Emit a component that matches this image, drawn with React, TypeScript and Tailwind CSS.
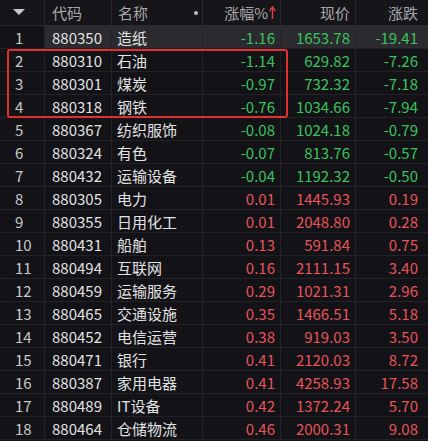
import React from "react";

type Row = [string, string, string, string, string, string];

const rows: Row[] = [
  ["1", "880350", "造纸", "-1.16", "1653.78", "-19.41"],
  ["2", "880310", "石油", "-1.14", "629.82", "-7.26"],
  ["3", "880301", "煤炭", "-0.97", "732.32", "-7.18"],
  ["4", "880318", "钢铁", "-0.76", "1034.66", "-7.94"],
  ["5", "880367", "纺织服饰", "-0.08", "1024.18", "-0.79"],
  ["6", "880324", "有色", "-0.07", "813.76", "-0.57"],
  ["7", "880432", "运输设备", "-0.04", "1192.32", "-0.50"],
  ["8", "880305", "电力", "0.01", "1445.93", "0.19"],
  ["10", "880355", "日用化工", "0.01", "2048.80", "0.28"],
  ["10", "880431", "船舶", "0.13", "591.84", "0.75"],
  ["11", "880494", "互联网", "0.16", "2111.15", "3.40"],
  ["12", "880459", "运输服务", "0.29", "1021.31", "2.96"],
  ["13", "880465", "交通设施", "0.35", "1466.51", "5.18"],
  ["14", "880452", "电信运营", "0.38", "919.03", "3.50"],
  ["15", "880471", "银行", "0.41", "2120.03", "8.72"],
  ["16", "880387", "家用电器", "0.41", "4258.93", "17.58"],
  ["17", "880489", "IT设备", "0.42", "1372.24", "5.70"],
  ["18", "880464", "仓储物流", "0.46", "2000.31", "9.08"],
];
rows[8][0] = "9";

const font = {
  fontFamily: '"Noto Sans CJK SC", "Noto Sans", sans-serif',
};

export default function App() {
  return (
    <div
      className="relative w-[428px] h-[441px] overflow-hidden bg-[#131317] text-[15px] leading-none"
      style={font}
    >
      <div className="grid grid-cols-[45px_67px_91px_78px_75px_72px]">
        {/* header */}
        <div className="h-[26px] flex items-center justify-center border-r border-b border-[#2a2a2f] bg-[#16161a] pr-[6px]">
          <svg width="12" height="7" viewBox="0 0 12 7">
            <path d="M0 0 L12 0 L6 6 Z" fill="#c8c8c8" />
          </svg>
        </div>
        <div className="h-[26px] flex items-center pl-[7px] border-r border-b border-[#2a2a2f] bg-[#16161a] text-[#a8a8a8]">
          代码
        </div>
        <div className="h-[26px] flex items-center justify-between pl-[6px] pr-[4px] border-r border-b border-[#2a2a2f] bg-[#16161a] text-[#a8a8a8]">
          <span>名称</span>
          <span className="w-[4px] h-[4px] rounded-full bg-[#bdbdbd]" />
        </div>
        <div className="h-[26px] flex items-center justify-end pr-[4px] border-r border-b border-[#2a2a2f] bg-[#16161a] text-[#a8a8a8]">
          <span>涨幅%</span>
          <svg width="7" height="14" viewBox="0 0 7 14" className="ml-[1px]">
            <path d="M3.5 1 L3.5 13" stroke="#e0413f" strokeWidth="1.4" />
            <path d="M0.5 5 L3.5 1 L6.5 5" stroke="#e0413f" strokeWidth="1.4" fill="none" />
          </svg>
        </div>
        <div className="h-[26px] flex items-center justify-end pr-[5px] border-r border-b border-[#2a2a2f] bg-[#16161a] text-[#a8a8a8]">
          现价
        </div>
        <div className="h-[26px] flex items-center justify-end pr-[10px] border-b border-[#2a2a2f] bg-[#16161a] text-[#a8a8a8]">
          涨跌
        </div>

        {rows.map((r, i) => {
          const neg = r[3].startsWith("-");
          const color = neg ? "text-[#3cc35e]" : "text-[#e8535a]";
          const hl = i === 0 ? "bg-[#2a2a2f]" : "";
          return (
            <React.Fragment key={i}>
              <div className="h-[23px] flex items-center pl-[15px] border-r border-b border-[#232327] text-[#c9c9c9]">
                {r[0]}
              </div>
              <div className={`h-[23px] flex items-center pl-[7px] border-r border-b border-[#232327] text-[#e2e2e2] ${hl}`}>
                {r[1]}
              </div>
              <div className={`h-[23px] flex items-center pl-[5px] border-r border-b border-[#232327] text-[#e2e2e2] ${hl}`}>
                {r[2]}
              </div>
              <div className={`h-[23px] flex items-center justify-end pr-[5px] border-r border-b border-[#232327] ${color} ${hl}`}>
                {r[3]}
              </div>
              <div className={`h-[23px] flex items-center justify-end pr-[5px] border-r border-b border-[#232327] ${color} ${hl}`}>
                {r[4]}
              </div>
              <div className={`h-[23px] flex items-center justify-end pr-[10px] border-b border-[#232327] ${color} ${hl}`}>
                {r[5]}
              </div>
            </React.Fragment>
          );
        })}
      </div>
      <div className="absolute left-[7px] top-[49px] w-[281px] h-[69px] border-2 border-[#e0312f] rounded-[3px] pointer-events-none" />
    </div>
  );
}
